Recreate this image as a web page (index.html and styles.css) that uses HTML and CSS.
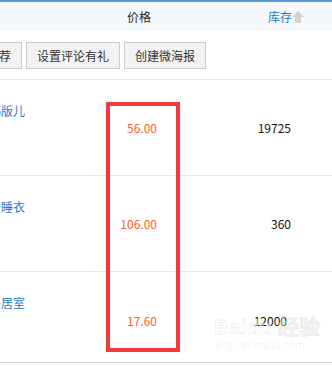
FILE: index.html
```html
<!DOCTYPE html>
<html lang="zh-CN">
<head>
  <meta charset="UTF-8">
  <meta name="viewport" content="width=device-width, initial-scale=1.0">
  <title>商品列表</title>
  <link rel="stylesheet" href="styles.css">
</head>
<body>
  <div class="topbar"></div>

  <div class="thead">
    <div class="th th-name"></div>
    <div class="th th-price">价格</div>
    <div class="th th-stock">
      <a href="#" class="sort">库存</a>
      <svg class="sort-icon" width="12" height="12" viewBox="0 0 12 12"><polygon points="6,0 12,6 9,6 9,12 3,12 3,6 0,6" fill="#d2d2d2"/></svg>
    </div>
  </div>

  <div class="actions">
    <button class="btn btn-cut">商品推荐</button>
    <button class="btn">设置评论有礼</button>
    <button class="btn">创建微海报</button>
  </div>

  <div class="list">
    <div class="row">
      <div class="cell name"><a href="#">儿童卡通韩版儿</a></div>
      <div class="cell price">56.00</div>
      <div class="cell stock">19725</div>
    </div>
    <div class="row">
      <div class="cell name"><a href="#">纯棉家居睡衣</a></div>
      <div class="cell price">106.00</div>
      <div class="cell stock">360</div>
    </div>
    <div class="row row-last">
      <div class="cell name"><a href="#">简约风格居室</a></div>
      <div class="cell price">17.60</div>
      <div class="cell stock stock-off">12000</div>
    </div>

    <!-- red mark over price column -->
    <div class="mark"></div>

    <div class="watermark">
      <div class="wm-logo">Bai<span>du</span> 经验</div>
      <div class="wm-url">jingyan.baidu.com</div>
    </div>
  </div>
</body>
</html>
```

FILE: styles.css
```css
* { box-sizing: border-box; }
body {
  margin: 0;
  width: 332px;
  overflow: hidden;
  background: #fff;
  font-family: "Noto Sans CJK SC", "Microsoft YaHei", sans-serif;
  font-size: 12px;
  color: #333;
}
a {
  color: #1f78c8;
  text-decoration: none;
}
.topbar {
  height: 2px;
  background: #5c97cd;
}
.thead {
  display: grid;
  grid-template-columns: 106px 74px 1fr;
  height: 29px;
  background: #f5f9fc;
  align-items: center;
}
.th-price {
  text-align: right;
  padding-right: 29px;
  color: #222;
}
.th-stock {
  display: flex;
  justify-content: flex-end;
  align-items: center;
  padding-right: 28px;
}
.actions {
  display: flex;
  gap: 4px;
  padding: 11px 0 10px;
  border-bottom: 1px solid #e6e6e6;
  overflow: hidden;
}
.btn {
  flex: none;
  height: 27px;
  padding: 0 10px;
  border: 1px solid #cccccc;
  border-radius: 0;
  background: #f2f2f2;
  font: inherit;
  color: #333;
  cursor: pointer;
}
.btn-cut {
  margin-left: -48px;
}
.list {
  position: relative;
}
.row {
  display: grid;
  grid-template-columns: 106px 74px 1fr;
  height: 96px;
  border-bottom: 1px solid #e6e6e6;
}
.row-last {
  height: 91px;
  border-bottom-color: #cfcfcf;
}
.cell.name {
  display: flex;
  justify-content: flex-end;
  overflow: hidden;
  white-space: nowrap;
  padding: 22px 81px 0 0;
  line-height: 18px;
}
.cell.price,
.cell.stock {
  align-self: center;
  text-align: right;
  line-height: 18px;
}
.cell.price {
  color: #ff6326;
  padding-right: 23px;
}
.cell.stock {
  color: #111;
  padding-right: 41px;
}
.row-last .cell.price,
.row-last .cell.stock {
  padding-top: 8px;
}
.stock-off {
  padding-right: 45px !important;
}
.mark {
  position: absolute;
  left: 106px;
  top: 22px;
  width: 74px;
  height: 250px;
  border: 4px solid #f23a3a;
}
.watermark {
  position: absolute;
  left: 214px;
  top: 235px;
  width: 92px;
  text-align: center;
  pointer-events: none;
}
.wm-logo {
  font-family: "Liberation Sans", sans-serif;
  font-size: 21px;
  font-weight: bold;
  line-height: 24px;
  -webkit-text-stroke: 1px rgba(0, 0, 0, 0.08);
  color: rgba(255, 255, 255, 0.5);
  white-space: nowrap;
}
.wm-url {
  font-family: "Liberation Sans", sans-serif;
  font-size: 11px;
  line-height: 12px;
  color: rgba(0, 0, 0, 0.07);
}
```
